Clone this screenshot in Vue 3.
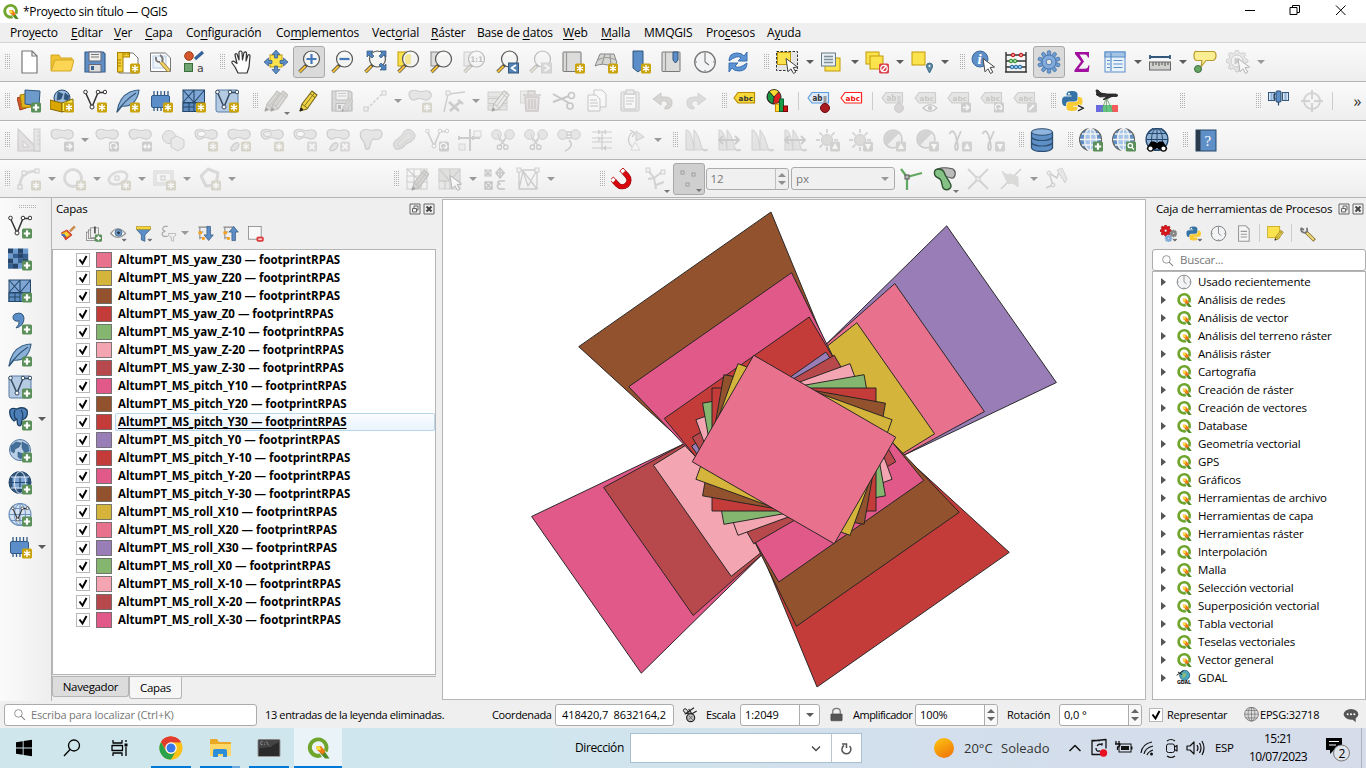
<script setup>
const line = (d, c = '#555', w = 1.2, f = 'none') =>
  `<path d="${d}" fill="${f}" stroke="${c}" stroke-width="${w}" stroke-linejoin="round"/>`
const rect = (x, y, w, h, f, s = 'none', r = 0) =>
  `<rect x="${x}" y="${y}" width="${w}" height="${h}" rx="${r}" fill="${f}" stroke="${s}"/>`
const circ = (x, y, r, f, s = 'none', w = 1) =>
  `<circle cx="${x}" cy="${y}" r="${r}" fill="${f}" stroke="${s}" stroke-width="${w}"/>`
const badge = (f, inner) => rect(14, 13.5, 10, 10, f, 'none', 1.5) + inner
const star = badge('#c8a30c', line('M19 15v7M16 16.8l6 3.4M22 16.8l-6 3.4', '#fff', 1.4))
const plus = badge('#5a8f5a', line('M19 15.3v6.4M15.8 18.5h6.4', '#fff', 2.2))
const cross = badge('#c9a5ab', line('M16.5 16l5 5M21.5 16l-5 5', '#fff', 1.8))
const go = badge('#8d8d8d', line('M16 18.5h5.5M19 15.8l2.8 2.7l-2.8 2.7', '#fff', 1.6))
const turn = badge('#8d8d8d', line('M17 20.8a3 3 0 1 1 4-1.2M18.5 19l2.4 1.4l1.4-2.3', '#fff', 1.3))
const wide = badge('#8d8d8d', line('M16 18.5h6M17.8 16.4l-2 2.1l2 2.1M20.2 16.4l2 2.1l-2 2.1', '#fff', 1.3))
const up = badge('#99998f', '<path d="M19 15l3 6h-6z" fill="#fff"/>')
const down = badge('#99998f', '<path d="M19 22l3-6h-6z" fill="#fff"/>')
const cursor = '<path d="M12 8.500L23.500 17l-4.300 .6l2.600 4.600l-2.300 1.300l-2.600-4.700l-2.900 3z" fill="#fff" stroke="#444" stroke-width="1"/>'
const lens = (inner = '', hx = 0) =>
  line('M10 14.5L2.5 22', '#3a3a3a', 3.4) + line(`M8.6 16L2.6 22`, '#f2bf3a', 2.2) +
  circ(14.5 + hx, 9, 8, '#f4f4f2', '#555', 1.2) + line('M10.5 5.5q3-2.5 7-1', '#fff', 1.5) + inner
const blob = (f = '#c4cbc4') => line('M1 6C.8 1.500 5 .8 8 1.500C11 2.500 12 3 15 2.300C19 1 23.300 2 23.300 6.500C23 10.500 19 12 15.500 10.500C12 9 10 9 8 10.500C5 12 1.500 10.500 1 6z', '#888', 1.2, f)
const leaf = line('M6 23q-5-1 1-7q5-3 5 1q-1 5-6 6z', '#888', 1.2, '#c4cbc4')
const vee = (c = '#333') => line('M2.500 3.500L9 18L15 3.500H22', c, 1.5) + circ(2.5, 3, 1.8, '#fff', c) + circ(9, 18, 2, '#fff', c) + circ(15, 3, 1.8, '#fff', c) + circ(22, 3, 1.8, '#fff', c)
const mesh = rect(1, 1, 21.500, 21.500, '#7fa6d4', '#24486b') + rect(1, 14, 21.500, 8.500, '#5f8cc0', '#24486b') + line('M12 1v21.500M1 13.500h21.500M1 1l11 12.500M12 1L1 13.500M12 13.500L22.500 1M7 14v8M1 18h11', '#24486b', 1.1)
const chip = rect(2.5, 6.5, 18, 12, '#5b8dc8', '#315a86', 1.5) + line('M5 6V2M8.500 6V2M12 6V2M15.500 6V2M19 6V2M5 19v3M8.500 19v3M12 19v3', '#315a86', 1.3)
const feather = line('M1 23Q3 8 14 3q5-2 9-2q-1 9-7 14q-5 3-10 2z', '#3a6288', 1.2, '#8ab0d8') + line('M1 23Q8 12 20 4', '#34577a', 1.2)
const page = line('M5 1h10l5 5v17H5z', '#777', 1.2, '#fff') + line('M15 1v5h5', '#777')
const book = rect(2, 2, 18, 19.500, '#dcdcda', '#777', .5) + line('M5.500 2v19.500', '#999')
const tag = (f, s, c, t = 'abc') => line('M1 9l4-5.500h16.500v10.500H5z', s, 1.2, f) + `<text x="5.500" y="11.500" font-family="DejaVu Sans" font-weight="bold" font-size="${t === 'abc' ? 7 : 8}" textLength="${t === 'abc' ? 14.5 : 10}" lengthAdjust="spacingAndGlyphs" fill="${c}">${t}</text>`
const pencil = (c = '#f1d445') => line('M3 22l2-7L15 2l5 4l-10 14z', '#74651e', 1.1, c) + line('M5 15l5 4M13 4.500l5 4M7.500 17L17.500 4', '#74651e', .9) + line('M3 22l1-3l2 1.400z', '#222', 1, '#222')
const globe = (a = '#79a5d6', g = '#24486b') => circ(12, 11.500, 11, a, g, 1.2) + line('M12 .5v22M1 11.500h22M3 5.500h18M3 17.500h18', g, 1) + `<ellipse cx="12" cy="11.500" rx="5.500" ry="11" fill="none" stroke="${g}"/>`
const webglobe = circ(11.500, 11.500, 11, '#5f8fc7', '#666', 1.2) + '<ellipse cx="11.500" cy="11.500" rx="6" ry="11" fill="#a5c5e8" stroke="#eee" stroke-width="1.500"/>' + line('M11.500 .5v22M1 11.500h21M3 6h17M3 17h17', '#f2f2f2', 1.3)
const earth = circ(12, 11, 10.5, '#b8cfe6', '#527ba5', 1) + line('M3 7l5-4l5 1l-2 4l-4 2l-1 4l-3-2zM14 3l6 3l1 6l-4 2l-3-5zM10 13l5 2l-2 5l-3-2z', '#31577c', .6, '#436f9a')
const yel = (x, y, w, h) => rect(x, y, w, h, '#fbe34d', '#c29b07')
const gear = (x, y, r, f, s) => { let d = ''; for (let i = 0; i < 32; i++) { const a = (i - .5) * Math.PI / 16, q = (i % 4 < 2) ? r : r * .76; d += (i ? 'L' : 'M') + (x + q * Math.cos(a)).toFixed(1) + ' ' + (y + q * Math.sin(a)).toFixed(1) } return line(d + 'z', s, 1, f) + circ(x, y, r * .25, '#eee', s, .8) }
const gear8 = Array.from({ length: 10 }, (_, i) => `<rect x="10.300" y=".8" width="3.400" height="6" rx="1" fill="#6d9bd2" stroke="#3c6ea6" stroke-width=".7" transform="rotate(${i * 36} 12 12)"/>`).join('') + circ(12, 12, 7, '#82abdc', '#3c6ea6', .8) + circ(12, 12, 2.8, '#e5e5e5', '#3c6ea6', .8)
const python = '<path d="M11.500 2q6-.5 6 3.500v4q0 3-3 3H9q-3 0-3 3v1.500H4.500Q2 16.500 2 12t3-4.500h6.500v-1H6.500V5q0-2.800 5-3z" fill="#3572a5"/><path d="M12.500 22q-6 .5-6-3.500v-3q0-2.500 3-2.500H15q3 0 3-3V8h1.500Q22.500 8 22.500 12.500t-3.500 4.200h-6v1h4.500V19q0 2.800-5 3z" fill="#fbcb35"/><circle cx="9" cy="4.800" r="1" fill="#fff"/>'
const clock = circ(12, 12, 10.3, '#f2f4f6', '#777', 1.3) + line('M12 12V4M12 12l4 3M12 2.500v1.500M12 20v1.500M2.500 12h1.500M20 12h1.500', '#777', 1.1)
const qlogo = '<path d="M12 1.500a10.200 10.200 0 1 0 4 19.600l-2.300-3.500a6.300 6.300 0 1 1 4.300-3.700l3.300 2.500A10.200 10.200 0 0 0 12 1.500z" fill="#6fa52c"/><path d="M13.500 12.500l3.500.5l6.500 9.500h-4.500l-5-5.500z" fill="#4f8a26"/><path d="M10 10h5l4.500 5.500l-3 3L11 14z" fill="#ee7913"/><path d="M10 10l4 .3l1 4l-4-.6z" fill="#fbe33f"/>'
const scissors = line('M9 12L6 2M14 12l3-9', '#999', 1.4) + circ(8, 19, 2.7, 'none', '#888', 1.7) + circ(16, 19, 2.7, 'none', '#888', 1.7) + line('M9 17L15 8M15 17L9 8', '#888', 1.7)
const lobes = circ(5.5, 6.5, 4.8, '#c4cbc4', '#888') + circ(18.5, 6.5, 4.8, '#c4cbc4', '#888')
const hist = line('M2 22V2q6 0 8 20zM10 22V2q5 6 7 15t7 4.500z', '#999', 1.1, '#c0cac0')
const sun = circ(11, 12, 5.5, '#b5b29c', '#888') + line('M11 1v4M11 19v4M0 12h4M18 12h4M3.500 4.500l3 3M18.500 4.500l-3 3M3.500 19.500l3-3', '#888', 1.6)
const half = circ(11, 11, 9, '#e4e4e4', '#888', 1.6) + line('M5 17A8.500 8.500 0 0 1 17 5z', '#999', .5, '#999')
const gamma = line('M1.500 6q3-6 6 1l2 8q1 7-1 7t-1-6L13 3', '#888', 1.8)
const floppy = (c = '#5f8fc7') => line('M2 2h18l2 2v18H2z', '#38618c', 1.2, c) + rect(6, 2, 12, 9, '#eee', '#667') + line('M8 4.500h8M8 7h8', '#777', 1.2) + rect(6, 14.5, 12, 7.5, '#ddd', '#667') + rect(8, 16, 3, 4, '#38618c')
const hammer = line('M8 13l10 9M20 12L9 22M17 11l5 4', '#888', 2.6)
const IC = {
  new: page,
  open: line('M1 20V5h8l2 3h11v4', '#d2a823', 1, '#f1c232') + line('M1 21L5 10h19l-3 11z', '#d2a823', 1, '#fcd555'),
  save: floppy(),
  layout: line('M3 3h14l5 5v15H3z', '#777', 1, '#fff') + rect(1.5, 2.5, 12, 4.5, '#f1ce35', '#a98000') + rect(1.5, 2.5, 5.5, 19.500, '#f1ce35', '#a98000') + line('M2 10h3M2 13h3M2 16h3M9 3v2M12 3v2', '#a98000') + star,
  manager: line('M1.500 3h15l5 5v13.500H1.500z', '#777', 1, '#fff') + rect(4, 6, 13, 12, '#eef4fa', '#b8cce4') + line('M12 12l8 9', '#9b7d2c', 4) + line('M12 12l8 9', '#f1d36a', 2.4) + line('M7 7q-1 5 4 5M11 5q4 3 2 7', '#777', 2),
  style: circ(7, 6, 4.3, '#d4572b', '#9c3a14') + line('M13 9l8-7', '#33639a', 3.2) + rect(2.5, 13.5, 8, 8, '#6ea56e', '#3b6e3b') + '<text x="15" y="22" font-family="DejaVu Sans" font-size="11" fill="#444">a</text>',
  pan: line('M7 23l-3-6l-3-4q-.5-2 1.500-2l3.500 2.500L4 5q.3-2 2-1l2 6L8 2q1.500-2 3 0l.5 8L13 2.500q2-1.500 2.500.5L15 11l2-6q2-1 2 1l-1 11l-2 6z', '#333', 1.2, '#fff'),
  pansel: yel(6, 5, 12, 12) + ['0', '90', '180', '270'].map(a => `<path transform="rotate(${a} 12 12)" d="M12 0l4 4.500h-2.500V8h-3V4.500H8z" fill="#5b8dc8" stroke="#31577c" stroke-width=".7"/>`).join(''),
  zin: lens(line('M14.500 4v10M9.500 9h10', '#4478b8', 2.2)), zout: lens(line('M9.500 9h10', '#4478b8', 2.2)),
  zfull: lens() + ['0', '90', '180', '270'].map(a => `<path transform="rotate(${a} 13.500 10.500)" d="M4 1h6L8 3l3 3l-2 2l-3-3l-2 2z" fill="#4f83bd" stroke="#31577c" stroke-width=".7"/>`).slice(0, 3).join(''),
  zsel: yel(2, 2, 12, 14) + lens(line('M14.500 4v10h-4q-3-5 0-9z', '#e9dc88', .5, '#f5e792')), zlay: rect(2, 2, 12, 14, '#ddd', '#888') + lens(),
  znat: rect(2, 2, 12, 14, '#ddd', '#888') + lens('<text x="8.500" y="12" font-family="DejaVu Sans" font-weight="bold" font-size="7.500" textLength="12.500" lengthAdjust="spacingAndGlyphs" fill="#555">1:1</text>'),
  zlast: lens() + rect(13.5, 13, 10, 10, '#5482b5', '#31577c') + line('M21 15l-4.500 3l4.500 3', '#fff', 1.8), znext: lens() + rect(13.5, 13, 10, 10, '#aaa', '#999') + line('M16.500 15l4.500 3l-4.500 3', '#fff', 1.8),
  map: book + star, map3d: line('M6 4h14l3 9l-4 4Q9 12 1 16z', '#888', 1, '#d5d5d2') + line('M4 10q8-5 18 0M11 4L8 14M16 4l1 12', '#999') + star,
  bookm: line('M6 1h10v17l-5 4L6 18z', '#31577c', 1, '#5b8dc8') + star, bookl: book + line('M13 2h5v8l-2.500 3L13 10z', '#31577c', 1, '#5b8dc8'), clock,
  refresh: line('M3 11q0-8 8-8q5 0 7 3l3-4v9h-9l3-3q-2-2-5-1t-7 4zM21 13q0 8-8 8q-5 0-7-3l-3 4v-9h9l-3 3q2 2 5 1t7-4z', '#3a6fb0', 1, '#5b93d3'),
  select: rect(1.5, 1.5, 21, 19, '#e5e5e5', 'none') + '<rect x="1.500" y="1.500" width="21" height="19" fill="none" stroke="#333" stroke-dasharray="2.500 1.500"/>' + yel(2.5, 2.500, 13, 12) + '<g transform="translate(-1)">' + cursor + '</g>',
  selform: yel(5, 8, 15, 13) + rect(1.5, 3, 14, 13, '#e8eef2', '#667c8a') + line('M4 6.500h9M4 9.500h9M4 12.500h9', '#7c909c', 1.4),
  desel: yel(1, 2, 13, 12) + yel(5, 6, 13, 13) + badge('#d9414b', circ(19, 18.5, 3.2, 'none', '#fff', 1.3) + line('M17 21l4-5', '#fff', 1.3)),
  selloc: yel(2, 2, 13, 13) + line('M19.500 23l-3-6q-.5-4 3-4t3 4z', '#3f6984', 1, '#5d8aa5') + circ(19.5, 16, 1, '#fff'),
  info: circ(9, 9, 8, '#5f8fc7', '#3d6ba2') + '<text x="6.500" y="14" font-family="Liberation Serif" font-style="italic" font-weight="bold" font-size="15" fill="#fff">i</text>' + cursor,
  abacus: line('M2 2v20M22 2v20M1 22h22M2 5h20M2 11h20M2 17h20', '#333', 1.4) + circ(9, 5, 1.8, '#f88', '#b11') + circ(17, 5, 1.8, '#f88', '#b11') + circ(7, 11, 1.8, '#9d9', '#383') + circ(11, 11, 1.8, '#9d9', '#383') + [8, 12, 16].map(x => circ(x, 17, 1.8, '#9cf', '#269')).join(''),
  gear: gear8, sum: '<path d="M5 2h14v5.500h-1.200q-.5-3-3-3H9.500l4.500 7l-5.500 7.300h6.500q3 0 3.300-3.300H19.500l-.8 6.500H4.500v-2l6.500-8.500l-6-7.500z" fill="#a10f9f"/>',
  table: rect(2, 2, 20, 20, '#eaf2fa', '#5b8dc8') + rect(2, 2, 20, 5, '#a4c4e5', '#5b8dc8') + line('M8 3v18M4 10.500h3M4 14h3M4 17.500h3M10.500 10.500h9M10.500 14h9M10.500 17.500h9', '#5b8dc8', 1.2),
  ruler: line('M2 7h20M2 5v4M22 5v4', '#31577c', 1.8) + rect(1.5, 12, 21, 8, '#d0d0cd', '#666') + line('M5 12v4M8 12v3M11 12v4M14 12v3M17 12v4M20 12v3', '#666'),
  tip: line('M4 1.500h16q3 0 3 4t-3 5h-7l-5 6.500l1-6.500H4q-3 0-3-5t3-4z', '#b79a2c', 1.2, '#fbee92') + circ(5, 19, 3.5, '#67a567', '#3c6e3c'),
  action: gear(11, 11, 11, '#ccc', '#888') + circ(11, 11, 6, '#eee', '#888') + line('M9 8l5 3l-5 3z', '#888', 1, '#888') + cursor,
  dsm: line('M0 9l9-3l3 12l-9 3z', '#9f3b16', 1, '#d1592b') + line('M3 6l10-2l1 14l-9 1z', '#a77e00', 1, '#e1b31f') + line('M8 1l15 1l-1 15l-14-2z', '#31577c', 1, '#6c9acb') + plus,
  geopkg: circ(12, 9, 8, '#9cbcdf', '#24486b') + line('M8 3l5 2l-2 5l-4 1zM15 4l4 3l-1 5l-4-2z', '#24486b', .5, '#31577c') + line('M0 11l12 3v9L0 20z', '#876600', 1, '#d7a600') + line('M12 14l11-4v10l-11 3z', '#876600', 1, '#fced50') + star,
  shp: vee() + star, spatialite: feather + star, temp: chip + star, mesh: mesh + star,
  gpx: rect(1, 1, 22, 22, '#b5cbe3', '#587ca5', 2) + vee('#34495f') + star,
  edits: '<g transform="translate(-2)">' + pencil('#b8a39b') + '</g><g transform="translate(4)">' + pencil('#b8a39b') + '</g>', edit: pencil(),
  saveed: floppy('#aaa') + '<g transform="translate(10 8) scale(.65)">' + pencil('#caa') + '</g>',
  dots: '<path d="M4 20L20 4" stroke="#888" stroke-width="1.300" stroke-dasharray="3 1.500"/>' + rect(1, 18, 4, 4, '#eee', '#888') + rect(19, 2, 4, 4, '#eee', '#888'), addpoly: blob() + star,
  vertex: line('M3 23L7 5L24 3', '#888', 1.4) + rect(5, 2, 4, 4, '#eee', '#888') + hammer,
  attrs: rect(2, 3, 19, 5, '#ccb', '#888') + rect(2, 9.5, 19, 5, '#ccb', '#888') + rect(2, 16, 19, 5, '#ccb', '#888') + '<g transform="translate(3)">' + pencil('#ddd') + '</g>',
  del: rect(1.5, 2, 10, 12, '#ddc', '#aa9') + line('M4 6h18M9 5v-3h7v3M6 8h14l-1 14H7zM10 10v10M13 10v10M16 10v10', '#b07878', 1.5, '#dcb8b8'),
  cut: line('M1 5l16 9M1 13l16-6', '#777', 2) + circ(19.5, 6.500, 3, 'none', '#777', 1.6) + circ(18, 17, 3, 'none', '#777', 1.6),
  copy: line('M9 1h8l4 4v13H9z', '#777', 1, '#fff') + line('M3 6h8l4 4v12H3z', '#777', 1, '#fff') + line('M5 11h7M5 14h8M5 17h8', '#777'), paste: rect(3, 3, 18, 19, '#ddd', '#777', 1) + rect(6, 5, 12, 15, '#fff', '#777') + rect(8, 1, 8, 4, '#ddd', '#777') + line('M8 9h8M8 12h8M8 15h6', '#777'),
  undo: line('M2 10l8-6v4q12-1 11 6q0 6-7 6v-2q4-2 2-5q-2-2-6-1v4z', '#a07060', 1, '#bb9a8a'), redo: line('M22 10l-8-6v4Q2 7 3 14q0 6 7 6v-2q-4-2-2-5q2-2 6-1v4z', '#889888', 1, '#a5b3a5'),
  label: tag('#f6d836', '#b78b00', '#333'), labelr: tag('#fff', '#f22', '#e11'),
  diagram: circ(8, 8, 7, '#dc2020', '#222') + line('M8 8L3 2.500q5-4 10 0z', '#222', .8, '#fd3') + line('M8 8L3 2.500Q-2 11 7 15z', '#222', .8, '#1a9a42') + rect(9.500, 15, 4, 7.500, '#fd3', '#c80') + rect(13.5, 10, 4, 12.500, '#1a9a42', '#063') + rect(17.5, 17, 4, 5.500, '#c11', '#700'),
  pinlab: tag('#dceafa', '#5b9be0', '#333', 'ab') + line('M18 7v9', '#999', 3) + circ(18, 19, 4.5, '#a91c22', '#6b0b10'), pinlabg: tag('#ccc9b5', '#888', '#777', 'ab') + line('M18 7v9', '#999', 3) + circ(18, 19, 4.5, '#b9a0a0', '#988'),
  showlab: tag('#ccc9b5', '#888', '#777') + line('M9 19q7-7 14 0q-7 7-14 0z', '#777', 1.2, '#fff') + circ(16, 19, 2.3, '#888'), movelab: tag('#ccc9b5', '#888', '#777') + go, rotlab: tag('#ccc9b5', '#888', '#777') + turn, edlab: tag('#ccc9b5', '#888', '#777') + badge('#99998f', line('M16 21l5-5', '#fff', 2)),
  python: '<g transform="translate(-2 0)">' + python + '</g>' + line('M16 16.500l5 2.700l-5 2.700', '#fff', 3.500) + line('M16 16.500l5.500 2.700l-5.500 2.700', '#333', 1.5),
  plane: line('M1 5.500q5-2.500 11-.5h9q3 .8 1 2.500H12L5 8z', '#222', .8, '#333') + line('M2 6L1 1h2l4 4zM14 6l-6 4.500h2.500L18 7z', '#222', .8, '#333') + rect(1, 16, 7, 7, '#6a6ae0') + rect(8, 16, 9, 7, '#5fc780') + rect(17, 16, 6, 7, '#f45a5a') + line('M11 10L6 23M12 10l6 13M11.500 10v13', '#6a9a6a', .8),
  sat: rect(1.500, 3.500, 6, 8, '#d9e6f6', '#34577a') + rect(15.500, 3.500, 6, 8, '#d9e6f6', '#34577a') + line('M4.500 4v7M18.500 4v7', '#8fb0d8', 2) + rect(9, 2, 5, 11, '#5b8dc8', '#24486b', 1) + line('M9 5h-2v5h2M11.500 13v3.500', '#24486b', 1.2),
  target: circ(12, 12, 8, 'none', '#999', 2) + line('M12 1v9M12 14v9M1 12h9M14 12h9', '#999', 2),
  tri: line('M1 1v22h22z', '#988', 1.2, '#cfbcb4') + line('M6 13v6h6z', '#988', 1, '#eee') + rect(17, 1, 6, 22, '#ccc', '#888') + line('M20 4h3M20 8h3M20 12h3M20 16h3', '#888'),
  move: blob() + go, rotate: blob() + turn, scale: blob() + wide, simplify: circ(8, 9, 6.5, '#c4cbc4', '#888') + line('M10 11l6-3l7 4v7l-6 4l-7-4z', '#888', 1, '#d4dcd4'),
  addring: blob() + '<ellipse cx="7.500" cy="6" rx="4" ry="2.700" fill="#fff" stroke="#888"/>' + star, addpart: blob() + leaf + star, fillring: blob() + '<ellipse cx="7.500" cy="6" rx="4" ry="2.700" fill="#ddd" stroke="#888"/>' + star, delring: blob() + '<ellipse cx="7.500" cy="6" rx="4" ry="2.700" fill="#fff" stroke="#888"/>' + cross, delpart: blob() + leaf + cross,
  reshape: line('M1.500 5C3 1 8 1 12 2.500C16 2 21 0 23 4.500C24 10 19 12.500 15 11C12 11 12 14 11 18C10 23 6 22 6 18C6 12 0 12 1.500 5z', '#888', 1.2, '#c4cbc4'), offset: line('M4 21q-6-5 3-11q3-2 5-6q4-5 9 0t-3 10q-4 1-6 4t-8 3z', '#999', 1.5, '#c4c4b4') + line('M6 18q-2-3 3-6q3-2 5-6q2-3 5 0t-3 6q-3 1-5 4t-5 2z', '#999', 1),
  reverse: vee('#888') + turn, splitf: line('M2 10h20M12 1v22M1 8v4M15 8v4', '#888', 2) + rect(16, 3, 7, 6, '#eee', '#999') + rect(1, 16, 6, 6, '#f0e0e0', '#c99'), scissors: lobes + '<g transform="translate(2 4) scale(.8)">' + scissors + '</g>', merge: lobes + line('M9 4h6M9 7h6M9 10h6M12 12q6 6-4 11', '#888', 1.5),
  mergea: line('M2 4h20M2 10h20M2 14h20M2 20h20M8 2l2 2l-2 2M16 2l-2 2l2 2M8 9l2 2l-2 2M16 18l-2 2l2 2M12 3v19', '#888', 1.2), rotsym: line('M11 20A9 9 0 0 1 10 4M7 2l5 3l-3 4', '#888', 1.3) + line('M13 3l8 6l-8 4z', '#888', 1, '#c0cac0') + line('M12 14l5 8h-9z', '#aaa', 1, '#fff'),
  hist, histw: hist + line('M3 12h18M6 8l-4 4l4 4M18 8l4 4l-4 4', '#888', 2), sunup: sun + up, sundn: sun + down, halfup: half + up, halfdn: half + down, gamup: gamma + up, gamdn: gamma + down,
  db: line('M1.500 4v16q2 3.500 10.500 3.500T22.500 20V4', '#2d5072', 1.3, '#5f8fc7') + '<ellipse cx="12" cy="4" rx="10.500" ry="3.300" fill="#8fb4de" stroke="#2d5072"/>' + line('M1.500 9.500q3 3 10.500 3t10.500-3M1.500 15q3 3 10.500 3t10.500-3', '#2d5072', 1.2),
  wadd: webglobe + plus, wfind: webglobe + badge('#5a8f5a', circ(18.300, 17.5, 2.200, 'none', '#fff', 1.3) + line('M20 19.500l2 2', '#fff', 1.3)), wbin: circ(12, 10, 10.5, '#a9c4e2', '#24486b') + globe('#8fb1d6') + line('M6 14h4l2 2l2-2h4l4 7h-8l-2-2l-2 2H2z', '#000', 1, '#000') + circ(5.500, 20.500, 2.700, '#fff', '#000', 1.2) + circ(18.500, 20.500, 2.700, '#fff', '#000', 1.2),
  help: rect(2, 2, 20, 21, '#5f8fc7', '#24486b') + rect(2, 2, 4.500, 21, '#2a3b4c') + '<text x="10.500" y="17.500" font-family="Liberation Serif" font-size="15" fill="#fff">?</text>',
  arc: line('M3 21Q2 4 20 4', '#aaa', 3) + rect(1, 18, 4, 4, '#eee', '#888') + rect(5, 4, 4, 4, '#eee', '#888') + rect(18, 2, 4, 4, '#eee', '#888') + star, circle: circ(11, 11, 8.5, 'none', '#aaa', 3) + star, ellipse: '<ellipse cx="11" cy="11" rx="9.500" ry="6" fill="none" stroke="#aaa" stroke-width="2.500" transform="rotate(-20 11 11)"/>' + rect(8, 9, 4, 4, '#eee', '#888') + star, rectg: rect(2, 4, 19, 14, 'none', '#999') + rect(4, 6, 15, 10, 'none', '#999') + rect(9, 9, 4, 4, '#eee', '#888') + star, penta: line('M4 9L11 2l10 4l-2 12l-10 1z', '#aaa', 3) + star,
  meshe: rect(2, 2, 20, 20, 'none', '#888') + line('M2 9h20M2 15h20M9 2v20M16 2v20M2 2l14 13', '#888') + '<g transform="translate(4 1)">' + pencil('#a99') + '</g>', meshs: rect(1, 2, 21, 20, '#d5d5cc', '#999') + rect(1, 2, 21, 12, '#bdbdab', '#999') + line('M12 2v20M1 14h21M1 2l11 12L22 2M7 14v8', '#888') + cursor, mesht: rect(2, 3, 6, 6, 'none', '#777') + line('M2 3l6 6M8 3L2 9M2 15l7 7M9 15l-7 7M2 15h7v7H2zM17 1l4 5l-4 5l-4-5zM13 6h9M17 1v10M22 14h-6q-3 2 1 3q-5 1-1 5h6', '#777', 1.5), meshp: line('M3 3h18v19H3zM3 22L7 4l5 15L21 3M7 4l14 18', '#888', 1.3) + rect(1, 1, 4, 4, '#eee', '#888') + rect(19, 1, 4, 4, '#eee', '#888'),
  magnet: '<g transform="translate(1 1.500) rotate(-43 12 12) scale(.88)"><path d="M5 6v6a7.500 7.500 0 0 0 15 0V6" fill="none" stroke="#8e0d12" stroke-width="6"/><path d="M5 6.500v5.500a7.500 7.500 0 0 0 15 0V6.500" fill="none" stroke="#d9070d" stroke-width="4.800"/><path d="M2.500 2.500h5v4.500h-5zM17.500 2.500h5v4.500h-5z" fill="#fff" stroke="#b11"/></g>', snapv: line('M4 3l6 8l8-6M10 11l2 11M4 12l6-1M12 18l8-3', '#999', 2) + rect(2, 1, 4, 4, '#eee', '#888') + rect(17, 3, 4, 4, '#eee', '#888'), snapd: rect(4, 4, 3, 3, '#ddd', '#888') + rect(15, 6, 3, 3, '#ddd', '#888') + rect(9, 16, 3, 3, '#ddd', '#888'),
  topo: line('M1 2l6 8l15-4M7 10v13', '#62a862', 2.2) + rect(5, 8, 4, 4, '#bbb', '#555'), avoid: line('M5 2C9 0 16 1 20 2C24 5 22 12 18 11C14 9 8 10 5 8z', '#555', 1.2, '#bbb') + line('M1.500 5C2 1 9 1 11 5C12 9 15 12 17 16C20 21 15 24 11 22C8 20 10 15 7 12C3 10 1 9 1.500 5z', '#2f5230', 1.4, '#85c285'), snapx: line('M2 2l20 20M22 2L2 22', '#999', 1.8) + rect(10, 10, 4, 4, '#ddd', '#888'), selfs: line('M2 22L22 2', '#999', 1.6) + line('M3 4q5 5 8 3l8 3v10q-6-6-10-3z', '#a8a890', 1, '#b0b09c'), trace: line('M2 21l7-3L5 6l8 5l2-6', '#888', 1.5) + circ(5, 6, 2, '#ddd', '#888') + circ(9, 18, 2, '#ddd', '#888') + line('M13 3l5-2l5 11l-2 4z', '#999', 1, '#ccc'),
  vadd: vee() + plus, radd: ['1313', '3212', '1321', '2133'].map((r, y) => [...r].map((c, x) => rect(x * 5, 1.500 + y * 5, 5.200, 5.200, ['', '#27466b', '#35608f', '#6d9bd0'][c])).join('')).join('') + plus, madd: mesh + plus, comma: line('M7 3q8-3 9 4q0 8-8 10q4-4 3-7q-6 1-6-4q0-2 2-3z', '#31577c', 1, '#5b8dc8') + plus, sadd: feather + plus, gadd: rect(1, 1, 22, 22, '#b5cbe3', '#587ca5', 2) + vee('#34495f') + plus,
  pg: line('M2 3C4 0 8 2 9 2C13 0 17 1 19 3C20 8 18 11 16 12L14 13L13 18Q11 20 9.500 17L9 12L6 14C3 12 1 7 2 3z', '#1d3f62', 1.3, '#4d80b8') + line('M7 3q-2 6 1 9M13 3q3 5 1 9', '#1d3f62') + plus, wms: earth + plus, wcs: circ(12, 11.500, 11, '#31577c', '#24486b') + line('M4 6q8-3 16 0v11q-8 3-16 0z', '#24486b', 1, '#7fa6d4') + line('M12 1v21M1 11.500h22', '#24486b') + '<ellipse cx="12" cy="11.500" rx="5.500" ry="11" fill="none" stroke="#dde8f4"/>' + line('M3 6h18M3 17h18', '#dde8f4') + plus, wfs: globe('#d5e2f2', '#6d92bd') + '<g transform="translate(3 3) scale(.75)">' + vee() + '</g>' + plus,
  brush: line('M14 9l7-7', '#c98a4a', 3.5) + line('M2 11l8-4l7 7l-9 7z', '#b22', 1, '#e54b32') + line('M3 12l6-3l5 5l-4 3z', '#d9a400', 1, '#fbd33a') + line('M2 14l4-1l2 4z', '#36b', 1, '#58c'), group: rect(2, 10, 12, 12, 'none', '#777') + rect(5, 7, 12, 12, '#eee', '#777') + rect(8, 4, 11, 14, '#eee', '#777') + line('M14 2v10', '#333', 2) + plus,
  eye: line('M1 12q10-13 21 0q-11 11-21 0z', '#999', 1.8, '#fff') + circ(12, 11, 5, '#6c96c4', '#3f6286') + circ(12, 11, 2, '#234') + line('M17 20h6l-3 3z', '#555', .5, '#555'), filter: line('M2 6h20l-8 8v9l-5-2v-7z', '#31577c', 1, '#5b8dc8') + rect(2, 2, 20, 4, '#f8d738', '#b79a2c') + line('M18 20h6l-3 3z', '#555', .5, '#555'), eps: line('M11 2H6Q1 6 7 9Q0 11 5 16h6', '#aaa', 1.8) + line('M12 12h10v3l-3 2v6l-3-1v-5l-4-2z', '#aaa', 1, '#eee'),
  expand: line('M2 3h14M4 3v17M4 10h5M4 18h5', '#888', 1.5) + rect(2, 9, 5, 4, '#f9a01b') + rect(7, 17, 4, 4, '#f9a01b') + line('M14 2h5v12h4l-6.500 8L10 14h4z', '#31577c', 1, '#5b8dc8'), collapse: line('M2 3h14M4 3v17M4 10h5M4 18h5', '#888', 1.5) + rect(2, 9, 5, 4, '#f9a01b') + rect(7, 17, 4, 4, '#f9a01b') + line('M14 22h5V10h4L16.500 2L10 10h4z', '#31577c', 1, '#5b8dc8'), remove: rect(2, 2, 18, 18, '#f8f8f8', '#777') + rect(14, 17, 9, 6, '#e84b50', '#c22', 1.5) + line('M16 20h5', '#fff', 1.6),
  gears: gear(8, 8, 8, '#d9141c', '#a11') + gear(19, 12, 5, '#888', '#777') + gear(12, 19, 5, '#7ea8d8', '#7ea8d8') + line('M18 20h6l-3 3z', '#555', .5, '#555'), py: python + line('M18 20h6l-3 3z', '#555', .5, '#555'), doc: line('M5 1h10l5 5v17H5zM8 9h9M8 13h9M8 17h9', '#999', 1.5, '#f5f5f5'), note: yel(1, 2, 17, 16) + '<g transform="translate(9 6) scale(.7)">' + pencil() + '</g>', wrench: line('M10 10l12 12', '#7a6a2f', 5) + line('M11 11l10 10', '#ecd477', 3) + line('M3 4q-1 6 5 7q5-1 3-7M3 4l4 3', '#777', 2.5),
  q: qlogo, gdal: circ(13, 8, 7.500, '#46a8c2', '#246') + line('M10 4l6 1l-2 6l-5 1z', '#696', .5, '#8b8') + line('M1 8L11 1M3 3l6 4', '#222', 1.5) + '<text x="1.500" y="20.500" font-family="DejaVu Sans" font-weight="bold" font-size="8" textLength="21" lengthAdjust="spacingAndGlyphs" fill="#111">GDAL</text>', search: circ(10, 10, 7, 'none', '#888', 1.6) + line('M15 15l7 7', '#888', 2),
  extents: line('M2 5q2-5 6 0t2 5q-6 1-8-5z', '#222', 1.5, '#ddd') + line('M4 11L18 1M7 15L22 6M10 3l8 12', '#222', 1.8) + circ(13, 16, 6, '#bbb', '#222', 1.8) + line('M10 13l6 6M16 13l-6 6', '#555'), lock: rect(3, 11, 18, 11, '#555', '#444', 1) + line('M6 11V7q0-5 6-5t6 5v4', '#777', 2), crs: globe('#ddd', '#666'), chat: '<ellipse cx="12" cy="11" rx="11" ry="8" fill="#555"/><path d="M12 17h7v6z" fill="#555"/>' + circ(7, 11, 1.5, '#fff') + circ(12, 11, 1.5, '#fff') + circ(17, 11, 1.5, '#fff'),
  win: '<path d="M4 6.200l6.700-1v6.300H4zM11.600 5l8.400-1.200v7.700h-8.400zM4 12.500h6.700v6.300L4 17.800zM11.600 12.500H20v7.700L11.600 19z" fill="#000"/>', tsearch: circ(14, 9.500, 5.500, 'none', '#000', 1.3) + line('M10 13.500L4 20', '#000', 1.3), tview: line('M5 4v3h9V4M5 20v-3h9v3M4 9.500h10.500v5H4zM18 4v2M18 11v9', '#000', 1.3) + rect(16.5, 7.5, 3, 3, '#000'),
  chrome: '<circle cx="12" cy="12" r="11.500" fill="#fbc116"/><path d="M2.100 6A11.500 11.500 0 0 1 22 6.250H12A5.750 5.750 0 0 0 7 9.100z" fill="#e33b2e"/><path d="M2.100 6A11.500 11.500 0 0 0 12 23.500l5-8.600a5.750 5.750 0 0 1-10 0z" fill="#2ba24c"/><path d="M2.100 6q2-4.800 9.900-5.500q7 .5 10 5.750L12 6.250q-3.500 0-5 8z" fill="#e33b2e"/><circle cx="12" cy="12" r="5.750" fill="#fff"/><circle cx="12" cy="12" r="4.500" fill="#3b78e7"/>',
  folder: '<path d="M2 4q0-1 1-1h6l2 3h11q1 0 1 1v13H2z" fill="#e9a825"/><path d="M2 8h21v12H2z" fill="#ffd766"/><path d="M5 21v-6q0-2 2-2h10q2 0 2 2v6h-4v-3h-5v3z" fill="#2e8fd8"/>', term: rect(1, 3.500, 22, 17, '#2b2b2b', '#999', 1) + line('M2 12q10 0 20-6v-2H2z', '#444', .5, '#444') + '<text x="3" y="9" font-family="DejaVu Sans Mono" font-size="5" fill="#bbb">C:\\_</text>',
  chev: line('M6.500 15l5.500-5.500l5.500 5.500', '#111', 1.5), onedr: line('M13 4.500H5v14h9M5 5l14-1.500v9', '#111', 1.3) + line('M10 10q2-3 5-1v-2M9 12q0 4 4 3', '#111', 1.3) + circ(16.500, 17, 3.700, '#e81123'), batt: rect(8, 8, 12, 8, 'none', '#111') + rect(10, 10, 8, 4, '#111') + rect(20, 10.5, 1.5, 3, '#111') + line('M5 5v3M8 5v3M4 8h5q0 3-2.500 3V14', '#111', 1.3), wifi: line('M6 17Q7 8 17 6M9 18q1-6 9-8M12 19q1-3 6-5', '#111', 1.2) + circ(16.5, 18, 1.5, '#111'), cam: rect(7.5, 8, 8, 8.500, 'none', '#111', 2) + line('M8 5q4-3 8 0M8 20q4 3 8 0M15.500 11l2.500-1.500v5.500l-2.500-1.500', '#111', 1.2), vol: line('M4 10h3l4-4v12l-4-4H4zM14 9q2 3 0 6M16.500 7q3 5 0 10M19 5q4 7 0 14', '#111', 1.2),
}

const off = s => s.split(' ').map(n => (n === '>' || n === '|') ? n : '-' + n)
const on = s => s.split(' ')
const rows = [
  [...on('new open save layout manager style : pan pansel *zin zout zfull zsel zlay -znat zlast -znext map map3d bookm bookl clock refresh : select > selform > desel > selloc > : info abacus *gear sum table > ruler > tip -action ->')],
  [...on('dsm geopkg shp spatialite temp mesh gpx : -edits edit -saveed -dots -> -addpoly -vertex -> -attrs -del -cut -copy -paste -undo -redo : label diagram | pinlab labelr | -pinlabg -showlab -movelab -rotlab -edlab : python plane s47 : s60 : sat -target | more')],
  [...off('tri move'), '->', ...off('rotate scale simplify addring addpart fillring delring delpart reshape offset reverse splitf scissors scissors merge mergea rotsym'), '->', ':', ...off('hist histw hist histw sunup sundn halfup halfdn gamup gamdn'), ':', 'db', ':', 'wadd', 'wfind', 'wbin', ':', 'help'],
  [...on('-arc -> -circle -> -ellipse -> -rectg -> -penta -> s147 : -meshe -meshs -> -mesht -meshp -> s34 : magnet -snapv *snapd spin combo topo avoid -snapx -selfs -> -trace')],
]
const clean = t => t.replace(/^[-*]/, '')

const menus = ['Pro_yecto', '_Editar', '_Ver', '_Capa', 'Co_nfiguración', 'Co_mplementos', 'Vect_orial', '_Ráster', 'Base de _datos', '_Web', '_Malla', 'MMQGIS', 'Pro_cesos', 'A_yuda'].map(m => {
  const i = m.indexOf('_')
  return i < 0 ? [m, '', ''] : [m.slice(0, i), m[i + 1], m.slice(i + 2)]
})
const side = ['vadd', 'radd', 'madd', 'comma', 'sadd', 'gadd', 'pg', 'wms', 'wcs', 'wfs', 'temp']

const H = 183.8, W2 = 82, H2 = 61.5, CX = 794, CY = 449.5, BASE = -35 * Math.PI / 180
const rot = (x, y, a) => [(CX + x * Math.cos(a) - y * Math.sin(a)).toFixed(2), (CY + x * Math.sin(a) + y * Math.cos(a)).toFixed(2)]
function footprint(kind, deg) {
  if (kind === 'yaw') return [[-W2, -H2], [W2, -H2], [W2, H2], [-W2, H2]].map(p => rot(p[0], p[1], deg * Math.PI / 180).join()).join(' ')
  const main = kind === 'roll' ? W2 : H2, other = kind === 'roll' ? H2 : W2
  const fov = Math.atan(main / H), t = deg * Math.PI / 180, pts = []
  for (const [s, sides] of [[-1, [-1, 1]], [1, [1, -1]]]) {
    const d = H * Math.tan(t + s * fov), w = other * Math.cos(fov) / Math.cos(t + s * fov)
    for (const k of sides) pts.push(kind === 'roll' ? rot(d, k * w, BASE) : rot(k * w, d, BASE))
  }
  return pts.map(p => p.join()).join(' ')
}
const C = { r: '#e8718d', y: '#d4b43a', b: '#91522d', d: '#c43c39', g: '#85b66f', l: '#f3a6b2', m: '#b7484b', p: '#e15989', v: '#987db7' }
const layers = [['yaw', 30, 'r'], ['yaw', 20, 'y'], ['yaw', 10, 'b'], ['yaw', 0, 'd'], ['yaw', -10, 'g'], ['yaw', -20, 'l'], ['yaw', -30, 'm'], ['pitch', 10, 'p'], ['pitch', 20, 'b'], ['pitch', 30, 'd'], ['pitch', 0, 'v'], ['pitch', -10, 'd'], ['pitch', -20, 'p'], ['pitch', -30, 'b'], ['roll', 10, 'y'], ['roll', 20, 'r'], ['roll', 30, 'v'], ['roll', 0, 'g'], ['roll', -10, 'l'], ['roll', -20, 'm'], ['roll', -30, 'p']].map(([k, a, c]) => ({
  name: `AltumPT_MS_${k}_${{ yaw: 'Z', pitch: 'Y', roll: 'X' }[k]}${a} — footprintRPAS`, color: C[c], points: footprint(k, a), current: k === 'pitch' && a === 30,
}))
const shapes = [...layers].reverse()
const tools = ['Usado recientemente', 'Análisis de redes', 'Análisis de vector', 'Análisis del terreno ráster', 'Análisis ráster', 'Cartografía', 'Creación de ráster', 'Creación de vectores', 'Database', 'Geometría vectorial', 'GPS', 'Gráficos', 'Herramientas de archivo', 'Herramientas de capa', 'Herramientas ráster', 'Interpolación', 'Malla', 'Selección vectorial', 'Superposición vectorial', 'Tabla vectorial', 'Teselas vectoriales', 'Vector general', 'GDAL']
const toolIcon = t => t === 'GDAL' ? IC.gdal : t === 'Usado recientemente' ? IC.clock : IC.q
const tray = ['chev', 'onedr', 'batt', 'wifi', 'cam', 'vol']
</script>

<template>
  <div class="app">
    <header class="title">
      <svg class="logo" viewBox="0 0 24 24" v-html="IC.q"></svg>
      <span>*Proyecto sin título — QGIS</span>
      <svg class="winbtns" viewBox="0 0 136 23">
        <path d="M15 10.500h10M60 7.500h7v7h-7zM62.500 7.500v-2h7v7h-2.500M106 5.500l9.500 9.500M115.500 5.500l-9.500 9.500" fill="none" stroke="#000" />
      </svg>
    </header>
    <nav class="menu"><span v-for="(m, i) in menus" :key="i">{{ m[0] }}<u>{{ m[1] }}</u>{{ m[2] }}</span></nav>

    <div v-for="(row, r) in rows" :key="r" class="bar">
      <i class="handle first"></i>
      <template v-for="(t, i) in row" :key="i">
        <i v-if="t === ':'" class="handle"></i>
        <i v-else-if="clean(t) === '>'" class="arrow" :class="{ dim: t[0] === '-' }"></i>
        <i v-else-if="t === '|'" class="sep"></i>
        <i v-else-if="/^s\d+$/.test(t)" :style="{ width: t.slice(1) + 'px' }"></i>
        <span v-else-if="t === 'more'" class="more">»</span>
        <div v-else-if="t === 'spin'" class="field spin big dis"><span>12</span><b></b></div>
        <div v-else-if="t === 'combo'" class="field unit dis"><span>px</span><i class="arrow dim"></i></div>
        <span v-else class="cell" :class="{ off: t[0] === '-', active: t[0] === '*', faint: t === '*snapd' }">
          <svg viewBox="0 0 24 24" v-html="IC[clean(t)]"></svg>
          <i v-if="['-edits', '-snapv', '*snapd', 'avoid'].includes(t)" class="corner"></i>
        </span>
      </template>
    </div>

    <main class="body">
      <aside class="side">
        <i class="grip"></i>
        <div v-for="(s, i) in side" :key="i" class="sideitem">
          <svg viewBox="0 0 24 24" v-html="IC[s]"></svg><i v-if="s === 'pg' || s === 'temp'" class="arrow"></i>
        </div>
      </aside>

      <section class="layers">
        <div class="dockhead"><span>Capas</span><svg viewBox="0 0 26 12"><path d="M1 1h10v10H1zM3.500 5.500h4v3.500h-4zM5 5V3h4v4H8M15 1h10v10H15z" fill="none" stroke="#666" /><path d="M17.500 3.500l5 5M22.500 3.500l-5 5" stroke="#444" stroke-width="2" /></svg></div>
        <div class="docktools">
          <svg v-for="n in ['brush', 'group', 'eye', 'filter', 'eps']" :key="n" viewBox="0 0 24 24" v-html="IC[n]"></svg>
          <i class="arrow dim"></i>
          <svg v-for="n in ['expand', 'collapse', 'remove']" :key="n" viewBox="0 0 24 24" v-html="IC[n]"></svg>
        </div>
        <div class="list">
          <div v-for="l in layers" :key="l.name" class="layer">
            <svg class="check" viewBox="0 0 14 14"><rect x=".5" y=".5" width="13" height="13" fill="#fff" stroke="#b8b8b8" /><path d="M3.500 6.500l3 4l4-7.500" fill="none" stroke="#000" stroke-width="2" /></svg>
            <svg class="swatch" viewBox="0 0 16 16"><rect x=".5" y=".5" width="15" height="15" :fill="l.color" stroke="#555" stroke-opacity=".75" /></svg>
            <span class="lname" :class="{ current: l.current }">{{ l.name }}</span>
          </div>
        </div>
        <div class="tabs"><span class="tab">Navegador</span><span class="tab on">Capas</span></div>
      </section>

      <section class="map">
        <svg viewBox="443 200 702 499">
          <polygon v-for="l in shapes" :key="l.name" :points="l.points" :fill="l.color" stroke="#232323" stroke-width=".95" stroke-linejoin="bevel" />
        </svg>
      </section>

      <section class="toolbox">
        <div class="dockhead"><span>Caja de herramientas de Procesos</span><svg viewBox="0 0 26 12"><path d="M1 1h10v10H1zM3.500 5.500h4v3.500h-4zM5 5V3h4v4H8M15 1h10v10H15z" fill="none" stroke="#666" /><path d="M17.500 3.500l5 5M22.500 3.500l-5 5" stroke="#444" stroke-width="2" /></svg></div>
        <div class="docktools">
          <svg v-for="n in ['gears', 'py', 'clock', 'doc']" :key="n" viewBox="0 0 24 24" v-html="IC[n]"></svg><i class="sep"></i>
          <svg viewBox="0 0 24 24" v-html="IC.note"></svg><i class="sep"></i>
          <svg viewBox="0 0 24 24" v-html="IC.wrench"></svg>
        </div>
        <div class="field find"><svg viewBox="0 0 24 24" v-html="IC.search"></svg><span>Buscar...</span></div>
        <div class="tree">
          <div v-for="t in tools" :key="t" class="node"><i></i><svg viewBox="0 0 24 24" v-html="toolIcon(t)"></svg><span>{{ t }}</span></div>
        </div>
      </section>
    </main>

    <footer class="status">
      <div class="field find"><svg viewBox="0 0 24 24" v-html="IC.search"></svg><span>Escriba para localizar (Ctrl+K)</span></div>
      <span class="msg">13 entradas de la leyenda eliminadas.</span>
      <span>Coordenada</span>
      <div class="field coord"><span>418420,7&nbsp; 8632164,2</span></div>
      <svg class="mid i16" viewBox="0 0 24 24" v-html="IC.extents"></svg>
      <span>Escala</span>
      <div class="field scale"><span>1:2049</span><b><i class="arrow"></i></b></div>
      <svg class="mid i14" viewBox="0 0 24 24" v-html="IC.lock"></svg>
      <span class="amp">Amplificador</span>
      <div class="field spin"><span>100%</span><b></b></div>
      <span class="rotl">Rotación</span>
      <div class="field spin"><span>0,0 °</span><b></b></div>
      <svg class="check mid render" viewBox="0 0 14 14"><rect x=".5" y=".5" width="13" height="13" fill="#fff" stroke="#b8b8b8" /><path d="M3.500 6.500l3 4l4-7.500" fill="none" stroke="#000" stroke-width="2" /></svg>
      <span class="rep">Representar</span>
      <svg class="mid i14" viewBox="0 0 24 24" v-html="IC.crs"></svg>
      <span class="epsg">EPSG:32718</span>
      <svg class="mid i16" viewBox="0 0 24 24" v-html="IC.chat"></svg>
    </footer>

    <footer class="task">
      <span class="app0"><svg viewBox="0 0 24 24" v-html="IC.win"></svg></span>
      <span class="app0"><svg viewBox="0 0 24 24" v-html="IC.tsearch"></svg></span>
      <span class="app0"><svg viewBox="0 0 24 24" v-html="IC.tview"></svg></span>
      <span class="app1 run g3"><svg viewBox="0 0 24 24" v-html="IC.chrome"></svg></span>
      <span class="app1 run multi"><svg viewBox="0 0 24 24" v-html="IC.folder"></svg></span>
      <span class="app1 run"><svg viewBox="0 0 24 24" v-html="IC.term"></svg></span>
      <span class="app1 front"><svg viewBox="0 0 24 24" v-html="IC.q"></svg></span>
      <span class="addr">Dirección</span>
      <div class="addrbox"><svg viewBox="0 0 230 28"><path d="M181 12.500l4 4l4-4" fill="none" stroke="#444" stroke-width="1.300" /><path d="M200.500 0v28" stroke="#b9c8d2" /><path d="M213 11.500a4.500 4.500 0 1 0 5.500 .5M211 10h4.500v4" fill="none" stroke="#555" stroke-width="1.500" /></svg></div>
      <i class="sun"></i><span class="temp">20°C</span><span class="cond">Soleado</span>
      <span class="tray"><svg v-for="t in tray" :key="t" viewBox="0 0 24 24" v-html="IC[t]"></svg></span>
      <span class="lang">ESP</span>
      <span class="clock"><span>15:21</span><span>10/07/2023</span></span>
      <svg class="notif" viewBox="0 0 30 30"><path d="M3 5h16v12H11l-4 4v-4H3z" fill="#000" /><path d="M6 8.500h10M6 12h7" stroke="#fff" /><circle cx="18.500" cy="20" r="8" fill="#dfe3ea" stroke="#777" /><text x="15.500" y="24.500" font-family="Open Sans" font-size="12">2</text></svg>
      <i class="peek"></i>
    </footer>
  </div>
</template>

<style>
html, body { margin: 0; overflow: hidden; }
</style>
<style scoped>
.app { width: 1366px; height: 768px; display: flex; flex-direction: column; background: #efefef; font: 11.5px/16px "Open Sans", "Noto Sans", sans-serif; color: #000; overflow: hidden; white-space: nowrap; }
.app * { box-sizing: border-box; }
svg { display: block; flex: none; }
i { flex: none; display: block; }
.title { height: 23px; background: #fff; display: flex; align-items: center; font-size: 12px; padding-left: 2px; }
.title > span { margin-left: 4px; flex: 1; letter-spacing: -.35px; }
.logo { width: 17px; height: 17px; }
.winbtns { width: 136px; height: 23px; }
.menu { height: 20px; flex: none; display: grid; grid-template-columns: 61px 43px 31px 41px 90px 96px 59px 46px 86px 38px 43px 62px 61px 50px; padding-left: 10px; align-items: center; border-bottom: 1px solid #d5d5d5; font-size: 12px; letter-spacing: -.2px; }
.menu u { text-underline-offset: 2px; }
.bar { height: 39px; flex: none; display: flex; align-items: center; background: linear-gradient(#fafafa, #eee); border-bottom: 1px solid #b4b4b4; }
.bar:nth-of-type(4) { height: 38px; }
.cell { width: 33px; height: 32px; flex: none; display: flex; align-items: center; justify-content: center; position: relative; left: -.5px; }
.cell svg { width: 24px; height: 24px; }
.cell.off svg { filter: grayscale(.8); opacity: .36; }
.cell.faint svg { opacity: .7; }
.cell.active { width: 32px; margin-right: 1px; left: 0; background: #dadada; border: 1px solid #a9a9a9; border-radius: 3px; }
.cell.faint { background: #cfcfcf; }
.corner { position: absolute; right: 2px; bottom: 2px; border: 3px solid transparent; border-top-color: #777; border-bottom: 0; }
.handle { width: 16px; height: 18px; }
.handle::after { content: ""; display: block; margin-left: 9px; width: 5px; height: 17px; background-image: repeating-linear-gradient(#f5f5f5 0 1px, transparent 1px 2px), repeating-linear-gradient(90deg, #b0b0b0 0 1px, transparent 1px 2px); }
.handle.first { width: 12.5px; }
.handle.first::after { margin-left: 5px; }
.arrow { width: 12px; height: 4px; }
.arrow::after { content: ""; display: block; margin-left: 2px; width: 0; border: 4px solid transparent; border-top-color: #5b5b5b; border-bottom: 0; }
.arrow.dim::after { border-top-color: #999; }
.sep { height: 18px; border-left: 1px solid #ccc; margin-left: 5px; width: 3px; }
.bar .sep { margin-left: 3px; width: 5px; }
.more { margin-left: 17px; font-size: 16px; line-height: 20px; color: #333; }
.field { background: #fff; border: 1px solid #ababab; border-radius: 3px; display: flex; align-items: center; height: 22px; padding-left: 4px; }
.field > span { flex: 1; }
.dis { background: #f0f0f0; color: #777; }
.big { width: 83.5px; flex: none; }
.unit { width: 103.5px; margin: 0 1px 0 2px; flex: none; height: 23px; padding-right: 3px; }
.spin b { width: 13px; height: 20px; border-left: 1px solid #ababab; display: flex; flex-direction: column; align-items: center; justify-content: center; gap: 4px; background: #f8f8f8; border-radius: 0 3px 3px 0; }
.spin b::before { content: ""; border: 4px solid transparent; border-bottom-color: #666; border-top: 0; }
.spin b::after { content: ""; border: 4px solid transparent; border-top-color: #666; border-bottom: 0; }
.dis.spin b { background: #eee; opacity: .7; }

.body { flex: 1; min-height: 0; display: flex; }
.side { width: 52px; border-right: 1px solid #b5b5b5; background: linear-gradient(90deg, #fbfbfb, #eee); padding: 6px 0 0 8px; }
.grip { width: 17px; height: 5px; margin-left: 11px; margin-bottom: 2px; background: repeating-linear-gradient(#f5f5f5 0 1px, transparent 1px 2px), repeating-linear-gradient(90deg, #b0b0b0 0 1px, transparent 1px 2px); }
.sideitem { height: 32px; display: flex; align-items: center; gap: 4px; }
.sideitem svg { width: 24px; height: 24px; }
.layers { width: 384px; flex: none; display: flex; flex-direction: column; }
.dockhead { height: 21px; flex: none; display: flex; align-items: center; padding: 0 1px 0 4px; letter-spacing: -.2px; }
.dockhead span { flex: 1; }
.dockhead svg { width: 26px; height: 12px; }
.docktools { height: 30px; flex: none; display: flex; align-items: center; gap: 9px; padding: 0 0 2px 8px; }
.docktools svg { width: 17px; height: 17px; margin-right: -1px; }
.docktools .arrow { margin: 0 -3px 0 -6px; }
.toolbox .docktools .sep { margin: 0 -4px 0 -1px; }
.toolbox .dockhead { padding-right: 2px; }
.list { height: 426px; border: 1px solid #b5b5b5; background: #fff; padding-top: 1px; }
.layer { height: 18px; display: flex; align-items: center; padding-left: 23px; }
.check { width: 14px; height: 14px; }
.swatch { width: 16px; height: 16px; margin: 0 3px 0 6px; }
.lname { font-weight: 700; font-size: 11.5px; letter-spacing: -.01px; line-height: 17px; padding-left: 3px; height: 18px; }
.current { flex: 1; text-decoration: underline; text-underline-offset: 2px; background: linear-gradient(#fbfdff, #e9f3fd); box-shadow: inset 0 0 0 1px #b9d7ef; border-radius: 2px; }
.tabs { border-top: 1px solid #b5b5b5; display: flex; align-items: flex-start; letter-spacing: -.35px; margin-top: 1px; }
.tab { width: 77px; height: 20px; text-align: center; line-height: 19px; background: #dcdcdc; border: 1px solid #b5b5b5; border-top: 0; border-radius: 0 0 3px 3px; }
.tab.on { width: 53px; height: 22px; background: #f6f6f6; line-height: 21px; }
.map { width: 704px; height: 501px; flex: none; margin: 1px 6px 0 6px; border: 1px solid #b5b5b5; background: #fff; }
.map svg { width: 702px; height: 499px; }
.toolbox { width: 214px; flex: none; display: flex; flex-direction: column; }
.find { gap: 5px; padding-left: 8px; color: #777; }
.find svg { width: 13px; height: 13px; }
.toolbox .find { flex: none; gap: 6px; letter-spacing: -.25px; }
.tree { flex: none; height: 429px; background: #fff; border: 1px solid #b5b5b5; padding-top: 1px; letter-spacing: -.16px; }
.node { height: 18px; display: flex; align-items: center; padding-left: 8px; }
.node i { border: 4px solid transparent; border-left: 5px solid #555; border-right: 0; width: 5px; }
.node svg { width: 16px; height: 16px; margin: 0 6px 0 10px; overflow: visible; }

.status { height: 27px; flex: none; display: grid; grid-template-columns: 253px 235px 63px 119px 32px 34px 80px 33px 62px 83px 61px 83px 25px 76px 17px 78px 26px; padding-left: 4px; align-items: center; font-size: 11px; letter-spacing: -.37px; }
.status .field { letter-spacing: -.1px; }
.status .field.find { letter-spacing: -.19px; }
.msg { padding-left: 8px; }
.coord { padding-left: 6px; }
.amp { letter-spacing: -.5px; }
.mid { justify-self: center; }
.render { margin-left: 3px; }
.epsg { letter-spacing: -.18px; }
.rep { letter-spacing: -.25px; }
.i16 { width: 16px; height: 16px; }
.i14 { width: 15px; height: 15px; }
.scale b { width: 20px; height: 20px; border-left: 1px solid #ababab; display: flex; align-items: center; justify-content: center; }
.rotl { padding-left: 9px; letter-spacing: -.2px; }
.task { height: 40px; flex: none; display: flex; align-items: center; background: linear-gradient(90deg, #cfe6ed, #d0e6ee 40%, #d2dfec 64%, #d6dcea); font-size: 12px; }
.app0, .app1 { width: 48px; height: 40px; flex: none; display: flex; align-items: center; justify-content: center; margin-right: 1px; position: relative; }
.app0 { margin-right: 0; }
.app0 svg, .app1 svg { width: 24px; height: 24px; }
.g3 { margin-left: 3px; }
.run::after { content: ""; position: absolute; left: 4px; bottom: 0; width: 40px; height: 2px; background: #0078d7; }
.multi::after { background: linear-gradient(90deg, #0078d7 32px, #65a9de 32px); }
.front { background: #eaf4f8; box-shadow: inset 0 -2px #0078d7; margin-right: 0; }
.addr { margin-left: 233px; width: 55px; letter-spacing: -.4px; }
.addrbox { width: 232px; height: 30px; background: #fff; border: 1px solid #a9bfcd; flex: none; }
.addrbox svg { width: 230px; height: 28px; }
.sun { width: 20px; height: 20px; border-radius: 50%; background: linear-gradient(150deg, #fcc80e, #ef6c0a); margin: 0 10px 0 72px; }
.temp { width: 37px; font-size: 13px; color: #333; }
.cond { width: 62px; font-size: 13px; color: #333; }
.tray { display: flex; width: 144px; flex: none; }
.tray svg { width: 24px; height: 24px; }
.lang { width: 34px; padding-left: 8px; font-size: 11.5px; letter-spacing: -.4px; }
.clock { width: 74px; display: flex; flex-direction: column; gap: 2px; text-align: center; letter-spacing: -.55px; }
.notif { width: 30px; height: 30px; margin-left: 8px; }
.peek { margin-left: 8px; width: 1px; height: 40px; background: #aab4c2; }
</style>
